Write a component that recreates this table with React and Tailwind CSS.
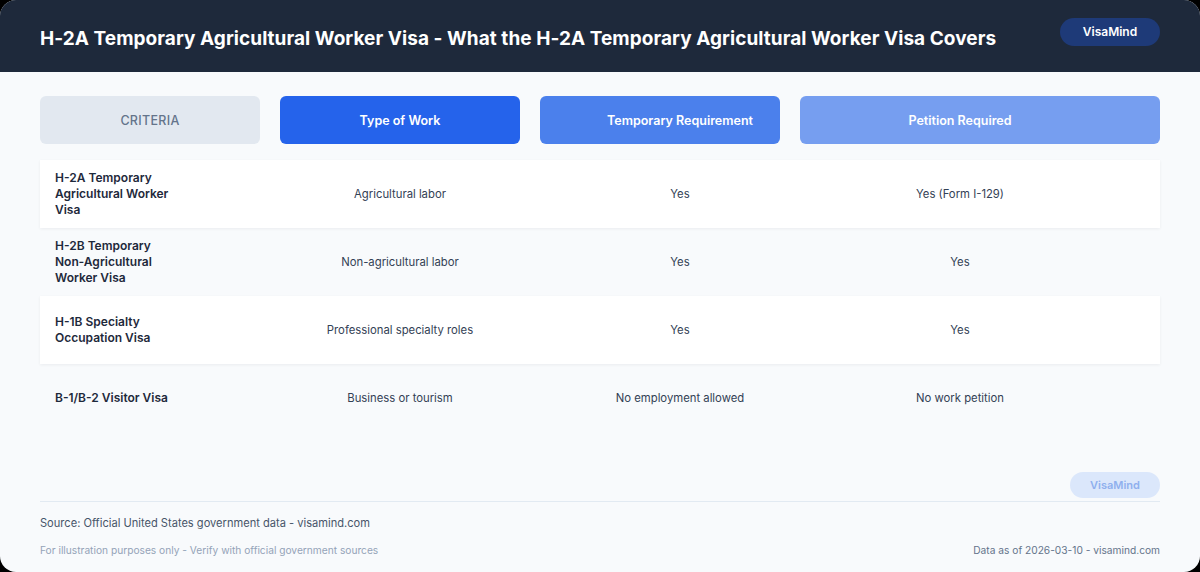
import React from "react";

const rows = [
  { name: "H-2A Temporary Agricultural Worker Visa", work: "Agricultural labor", temp: "Yes", petition: "Yes (Form I-129)", shaded: true },
  { name: "H-2B Temporary Non\u2011Agricultural Worker Visa", work: "Non-agricultural labor", temp: "Yes", petition: "Yes", shaded: false },
  { name: "H-1B Specialty Occupation Visa", work: "Professional specialty roles", temp: "Yes", petition: "Yes", shaded: true },
  { name: "B-1/B-2 Visitor Visa", work: "Business or tourism", temp: "No employment allowed", petition: "No work petition", shaded: false },
];

export default function App() {
  return (
    <div className="w-[1200px] h-[572px] bg-black font-['Inter',sans-serif]">
      <div className="w-full h-full rounded-2xl overflow-hidden bg-[#f8fafc] flex flex-col">
        {/* Header */}
        <div className="h-[72px] shrink-0 bg-[#1e293b] flex items-center justify-between pl-10 pr-10">
          <h1 className="text-white text-[19px] font-bold tracking-[0.05px] pt-[6px]">
            H-2A Temporary Agricultural Worker Visa - What the H-2A Temporary Agricultural Worker Visa Covers
          </h1>
          <div className="w-[100px] h-[28px] rounded-full bg-[#1e3a78] text-white text-[12px] font-semibold flex items-center justify-center -mt-[8px]">
            VisaMind
          </div>
        </div>

        <div className="flex-1 flex flex-col px-10 pt-6">
          {/* Column headers */}
          <div className="grid grid-cols-[220px_240px_240px_360px] gap-5 h-12 text-[12.5px]">
            <div className="rounded-md bg-[#e2e8f0] text-[#64748b] font-medium tracking-wide flex items-center justify-center pt-[3px]">
              CRITERIA
            </div>
            <div className="rounded-md bg-[#2563eb] text-white font-semibold flex items-center justify-center pt-[3px]">
              Type of Work
            </div>
            <div className="rounded-md bg-[#4b80ec] text-white font-semibold flex items-center justify-center pl-10 pt-[3px]">
              Temporary Requirement
            </div>
            <div className="rounded-md bg-[#769ef0] text-white font-semibold flex items-center justify-center pr-10 pt-[3px]">
              Petition Required
            </div>
          </div>

          {/* Rows */}
          <div className="mt-4 flex flex-col">
            {rows.map((r) => (
              <div
                key={r.name}
                className={`h-[68px] grid grid-cols-[220px_280px_280px_280px] items-center ${
                  r.shaded ? "bg-white shadow-[0_1px_3px_rgba(15,23,42,0.06)]" : ""
                }`}
              >
                <div className="pl-[15px] max-w-[137px] text-[12px] leading-[16px] font-semibold text-[#1e293b]">
                  {r.name}
                </div>
                <div className="text-center text-[11.3px] text-[#334155]">{r.work}</div>
                <div className="text-center text-[11.3px] text-[#334155]">{r.temp}</div>
                <div className="text-center text-[11.3px] text-[#334155]">{r.petition}</div>
              </div>
            ))}
          </div>

          {/* Footer */}
          <div className="mt-auto">
            <div className="flex justify-end pb-[3px]">
              <div className="w-[90px] h-[26px] rounded-full bg-[#dbe7fb] text-[#8fb0ee] text-[11px] font-semibold flex items-center justify-center">
                VisaMind
              </div>
            </div>
            <div className="border-t border-[#e2eaf2] pt-[13px] pb-[14px]">
              <p className="text-[11.1px] text-[#475569]">Source: Official United States government data - visamind.com</p>
              <div className="flex justify-between mt-[11px] text-[10.2px] text-[#94a3b8]">
                <span>For illustration purposes only - Verify with official government sources</span>
                <span className="text-[#64748b]">Data as of 2026-03-10 - visamind.com</span>
              </div>
            </div>
          </div>
        </div>
      </div>
    </div>
  );
}
